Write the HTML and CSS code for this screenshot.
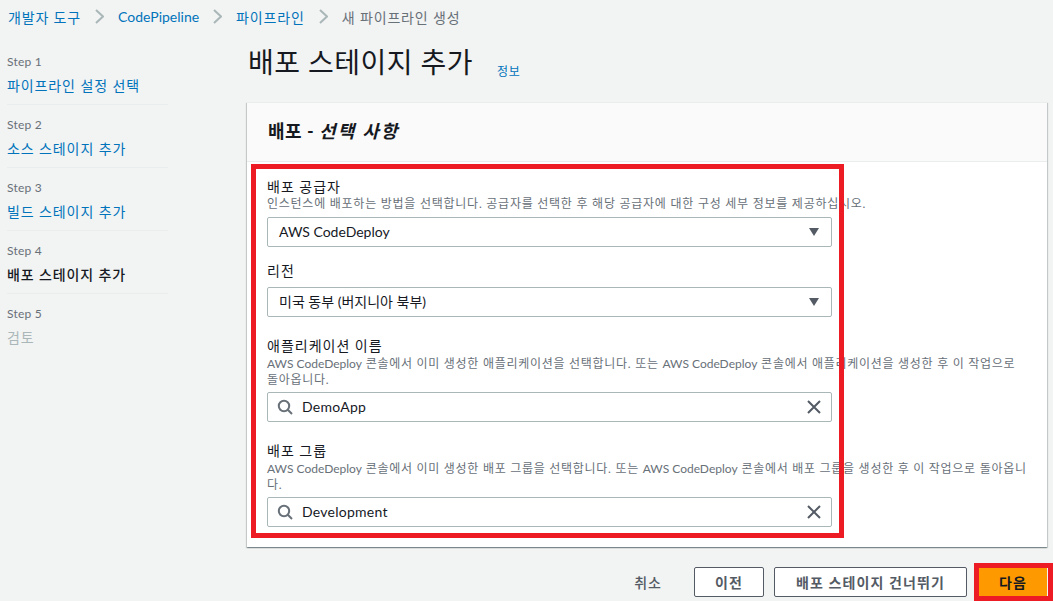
FILE: index.html
```html
<!DOCTYPE html>
<html lang="ko">
<head>
<meta charset="utf-8">
<title>배포 스테이지 추가</title>
<link rel="stylesheet" href="styles.css">
</head>
<body>
<nav class="crumbs">
  <a href="#" class="ko">개발자 도구</a>
  <svg class="chev" viewBox="0 0 9 15"><path d="M1 1l7 6.5-7 6.5"/></svg>
  <a href="#">CodePipeline</a>
  <svg class="chev" viewBox="0 0 9 15"><path d="M1 1l7 6.5-7 6.5"/></svg>
  <a href="#" class="ko">파이프라인</a>
  <svg class="chev" viewBox="0 0 9 15"><path d="M1 1l7 6.5-7 6.5"/></svg>
  <span class="current ko">새 파이프라인 생성</span>
</nav>
<div class="layout">
  <aside class="steps">
    <div class="step"><div class="step-no">Step 1</div><a href="#" class="step-name">파이프라인 설정 선택</a></div>
    <div class="step"><div class="step-no">Step 2</div><a href="#" class="step-name">소스 스테이지 추가</a></div>
    <div class="step"><div class="step-no">Step 3</div><a href="#" class="step-name">빌드 스테이지 추가</a></div>
    <div class="step"><div class="step-no">Step 4</div><span class="step-name active">배포 스테이지 추가</span></div>
    <div class="step last"><div class="step-no">Step 5</div><span class="step-name disabled">검토</span></div>
  </aside>
  <main class="main">
    <div class="title-row">
      <h1>배포 스테이지 추가</h1>
      <a href="#" class="info">정보</a>
    </div>
    <section class="card">
      <h2 class="card-head"><span>배포 - </span><em>선택 사항</em></h2>
      <div class="card-body">
        <div class="field f1">
          <div class="label">배포 공급자</div>
          <div class="desc">인스턴스에 배포하는 방법을 선택합니다. 공급자를 선택한 후 해당 공급자에 대한 구성 세부 정보를 제공하십시오.</div>
          <div class="control"><span class="value">AWS CodeDeploy</span><i class="caret"></i></div>
        </div>
        <div class="field f2">
          <div class="label">리전</div>
          <div class="control"><span class="value">미국 동부 (버지니아 북부)</span><i class="caret"></i></div>
        </div>
        <div class="field f3">
          <div class="label">애플리케이션 이름</div>
          <div class="desc wide"><span class="en">AWS CodeDeploy</span> 콘솔에서 이미 생성한 애플리케이션을 선택합니다. 또는 <span class="en">AWS CodeDeploy</span> 콘솔에서 애플리케이션을 생성한 후 이 작업으로 돌아옵니다.</div>
          <div class="control">
            <svg class="search" viewBox="0 0 16 16"><circle cx="7" cy="7" r="5.2"/><path d="M10.8 10.8L15 15"/></svg>
            <span class="value typed">DemoApp</span>
            <svg class="clear" viewBox="0 0 14 14"><path d="M1 1l12 12M13 1L1 13"/></svg>
          </div>
        </div>
        <div class="field f4">
          <div class="label">배포 그룹</div>
          <div class="desc wide"><span class="en">AWS CodeDeploy</span> 콘솔에서 이미 생성한 배포 그룹을 선택합니다. 또는 <span class="en">AWS CodeDeploy</span> 콘솔에서 배포 그룹을 생성한 후 이 작업으로 돌아옵니다.</div>
          <div class="control">
            <svg class="search" viewBox="0 0 16 16"><circle cx="7" cy="7" r="5.2"/><path d="M10.8 10.8L15 15"/></svg>
            <span class="value typed">Development</span>
            <svg class="clear" viewBox="0 0 14 14"><path d="M1 1l12 12M13 1L1 13"/></svg>
          </div>
        </div>
      </div>
    </section>
    <footer class="actions">
      <a href="#" class="cancel">취소</a>
      <button class="btn">이전</button>
      <button class="btn skip">배포 스테이지 건너뛰기</button>
      <button class="btn primary">다음</button>
    </footer>
  </main>
</div>
<div class="mark mark-form"></div>
<div class="mark mark-next"></div>
</body>
</html>
```
FILE: styles.css
```css
* { box-sizing: border-box; }
html, body { height: 601px; overflow: hidden; }
body {
  margin: 0;
  background: #f2f3f3;
  color: #16191f;
  font-family: "Lato", "Noto Sans CJK KR", sans-serif;
  font-size: 14px;
  position: relative;
}
a { color: #0073bb; text-decoration: none; }
.crumbs {
  display: flex;
  align-items: center;
  height: 33px;
  padding-left: 8px;
  font-size: 14px;
}
.ko { letter-spacing: 0.85px; }
.chev { width: 9px; height: 15px; margin: 0 14px; flex: none; }
.chev path { fill: none; stroke: #aab7b8; stroke-width: 2; }
.current { color: #687078; }
.layout { display: flex; }
.steps { width: 247px; flex: none; padding: 9px 0 0 7px; }
.step {
  width: 161px;
  height: 63px;
  padding-top: 11px;
  border-bottom: 1px solid #eaeded;
}
.step.last { border-bottom: 0; }
.step-no { font-size: 12px; line-height: 18px; color: #687078; letter-spacing: 0.2px; }
.step-name { display: block; line-height: 20px; margin-top: 5px; font-size: 14px; letter-spacing: 0.9px; }
.step-name.active { color: #16191f; font-weight: 500; }
.step-name.disabled { color: #aab7b8; }
.main { width: 800px; flex: none; }
.title-row { display: flex; align-items: baseline; height: 69px; padding: 9px 0 0 1px; }
h1 { margin: 0; font-size: 28px; line-height: 40px; font-weight: 400; letter-spacing: 0.45px; }
.info { font-size: 12px; margin-left: 24px; letter-spacing: 0.7px; position: relative; top: 3px; }
.card {
  background: #fff;
  height: 445px;
  border-top: 1px solid #eaeded;
  box-shadow: 0 1px 1px 0 rgba(0,28,36,.3), 1px 1px 1px 0 rgba(0,28,36,.15), -1px 1px 1px 0 rgba(0,28,36,.15);
}
.card-head {
  margin: 0;
  height: 59px;
  padding: 0 21px;
  background: #fafafa;
  border-bottom: 1px solid #eaeded;
  font-size: 18px;
  line-height: 57px;
  font-weight: 700;
  letter-spacing: 0.5px;
}
.card-head em { font-style: italic; letter-spacing: 2px; }
.card-body { padding: 16px 15px 0 20px; }
.label { font-size: 14px; line-height: 18px; letter-spacing: 1px; }
.desc { font-size: 12px; line-height: 16px; color: #687078; letter-spacing: 0.75px; white-space: nowrap; }
.desc.wide { white-space: normal; letter-spacing: 0.72px; }
.en { letter-spacing: 0; }
.field { width: 100%; }
.f2 { margin-top: 15px; }
.f3 { margin-top: 20px; }
.f4 { margin-top: 20px; }
.f2 .label { margin-bottom: 7px; }
.f1 .desc { height: 21px; }
.f3 .desc, .f4 .desc { height: 37px; padding-top: 1px; }
.control {
  display: flex;
  align-items: center;
  width: 565px;
  height: 30px;
  padding: 0 10px 0 11px;
  background: #fff;
  border: 1px solid #aab7b8;
  border-radius: 2px;
}
.field .desc { width: 761px; }
.value { flex: 1; font-size: 14px; line-height: 20px; }
.value.typed { letter-spacing: 0.25px; }
.caret {
  flex: none;
  width: 0;
  height: 0;
  margin-right: 2px;
  border-left: 5.5px solid transparent;
  border-right: 5.5px solid transparent;
  border-top: 8px solid #545b64;
}
.search { width: 16px; height: 16px; margin: 0 9px 0 -2px; flex: none; }
.search circle, .search path { fill: none; stroke: #687078; stroke-width: 2; }
.clear { width: 14px; height: 14px; flex: none; }
.clear path { fill: none; stroke: #545b64; stroke-width: 2; }
.actions {
  display: flex;
  align-items: center;
  justify-content: flex-end;
  gap: 10px;
  height: 30px;
  margin-top: 20px;
}
.cancel { color: #545b64; font-weight: 500; margin-right: 22px; letter-spacing: 1px; }
.btn {
  height: 30px;
  width: 70px;
  padding: 0;
  background: #fff;
  color: #545b64;
  border: 1px solid #545b64;
  border-radius: 2px;
  font-family: inherit;
  font-size: 14px;
  font-weight: 700;
  letter-spacing: 1.1px;
}
.btn.skip { width: 193px; }
.btn.primary {
  width: 68px;
  margin-left: 2px;
  background: #ff9900;
  border-color: #ff9900;
  color: #16191f;
}
.mark { position: absolute; border: 5px solid #ed1c24; pointer-events: none; }
.mark-form { left: 251px; top: 164px; width: 593px; height: 374px; }
.mark-next { left: 974px; top: 563px; width: 79px; height: 38px; }
```
